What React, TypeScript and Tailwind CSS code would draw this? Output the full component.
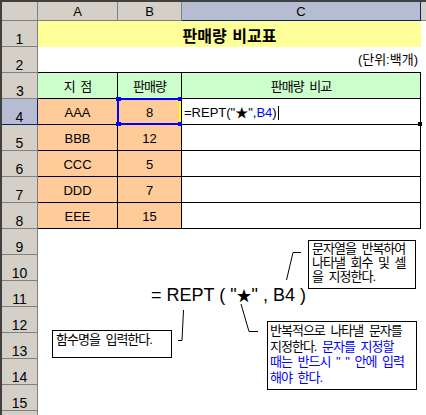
import React from 'react';

const cellFont = "font-['Liberation_Sans','Noto_Sans_CJK_KR',sans-serif]";
// Korean text: slightly larger glyphs, squeezed to the bitmap-font advance
const ko = 'text-[13px] tracking-[-1px] [word-spacing:3px]';

function RowHead({ n, active = false }: { n: number | string; active?: boolean }) {
  return (
    <div
      className={
        active
          ? 'w-[36px] shrink-0 flex items-end justify-center text-[14px] leading-none bg-[#b6bdd2] border-r border-b border-[#0a246a]'
          : 'w-[36px] shrink-0 flex items-end justify-center text-[14px] leading-none bg-[#d4d0c8] border-r border-b border-[#808080]'
      }
    >
      {n}
    </div>
  );
}

const data = [
  ['AAA', '8'],
  ['BBB', '12'],
  ['CCC', '5'],
  ['DDD', '7'],
  ['EEE', '15'],
];

const Sheet: React.FC = () => {
  return (
    <div className={`relative w-[426px] h-[415px] overflow-hidden bg-white text-black ${cellFont}`}>
      <div className="h-full flex flex-col border-t-2 border-l-2 border-[#404040]">
        {/* column headers */}
        <div className="flex h-[19px] shrink-0 text-[13px] leading-none">
          <div className="w-[36px] shrink-0 bg-[#d4d0c8] border-r border-b border-[#808080]" />
          <div className="w-[80px] shrink-0 flex items-center justify-center bg-[#d4d0c8] border-r border-b border-[#808080]">A</div>
          <div className="w-[64px] shrink-0 flex items-center justify-center bg-[#d4d0c8] border-r border-b border-[#808080]">B</div>
          <div className="w-[239px] shrink-0 flex items-center justify-center bg-[#b6bdd2] border-r border-b border-[#0a246a]">C</div>
          <div className="flex-1 bg-[#d4d0c8] border-b border-[#808080]" />
        </div>

        {/* row 1 */}
        <div className="flex h-[26px] shrink-0">
          <RowHead n={1} />
          <div className="w-[383px] shrink-0 flex items-center justify-center bg-[#ffff99] pt-[2px]">
            <span className="font-['Noto_Sans_CJK_KR',sans-serif] text-[16px] font-bold leading-none whitespace-nowrap [word-spacing:2px]">
              판매량 비교표
            </span>
          </div>
          <div className="flex-1" />
        </div>

        {/* row 2 */}
        <div className="flex h-[26px] shrink-0">
          <RowHead n={2} />
          <div className="w-[144px] shrink-0 border-b border-black" />
          <div className="w-[239px] shrink-0 flex items-center justify-end pr-[3px] pt-[1px] border-b border-black text-[13px]">
            (단위:백개)
          </div>
          <div className="flex-1" />
        </div>

        {/* row 3 */}
        <div className={`flex h-[26px] shrink-0 ${ko}`}>
          <RowHead n={3} />
          <div className="w-[80px] shrink-0 flex items-center justify-center pt-[2px] bg-[#ccffcc] border-r border-b border-black">지 점</div>
          <div className="w-[64px] shrink-0 flex items-center justify-center pt-[2px] bg-[#ccffcc] border-r border-b border-black">판매량</div>
          <div className="w-[239px] shrink-0 flex items-center justify-center pt-[2px] bg-[#ccffcc] border-r border-b border-black">판매량 비교</div>
          <div className="flex-1" />
        </div>

        {/* rows 4-8 */}
        {data.map(([name, qty], i) => (
          <div key={name} className="flex h-[26px] shrink-0 text-[13px]">
            <RowHead n={i + 4} active={i === 0} />
            <div className="w-[80px] shrink-0 flex items-center justify-center pt-[2px] bg-[#ffcc99] border-r border-b border-black">{name}</div>
            <div className="w-[64px] shrink-0 flex items-center justify-center pt-[2px] bg-[#ffcc99] border-r border-b border-black">{qty}</div>
            <div className="w-[239px] shrink-0 flex items-center pl-[2px] pt-[2px] border-r border-b border-black whitespace-nowrap">
              {i === 0 && (
                <>
                  <span>=REPT("★",</span>
                  <span className="text-[#0000ff]">B4</span>
                  <span>)</span>
                  <span className="inline-block w-px h-[14px] bg-black ml-px" />
                </>
              )}
            </div>
            <div className="flex-1" />
          </div>
        ))}

        {/* rows 9-15 */}
        {[9, 10, 11, 12, 13, 14, 15].map((n) => (
          <div key={n} className="flex h-[26px] shrink-0">
            <RowHead n={n} />
            <div className="flex-1" />
          </div>
        ))}
        <div className="flex flex-1">
          <div className="w-[36px] shrink-0 bg-[#d4d0c8] border-r border-[#808080]" />
          <div className="flex-1" />
        </div>
      </div>

      {/* B4 selection */}
      <div className="absolute left-[117px] top-[98px] w-[64px] h-[27px] border-2 border-[#0000ff] border-r-[#ffff00]" />
      <div className="absolute left-[116px] top-[97px] w-[5px] h-[4px] bg-[#0000ff]" />
      <div className="absolute left-[116px] top-[122px] w-[5px] h-[4px] bg-[#0000ff]" />
      <div className="absolute left-[178px] top-[97px] w-[4px] h-[4px] bg-[#0000ff]" />
      <div className="absolute left-[178px] top-[122px] w-[4px] h-[4px] bg-[#0000ff]" />
      {/* C4 fill handle */}
      <div className="absolute left-[418px] top-[122px] w-[4px] h-[4px] bg-black" />

      {/* leader lines */}
      <svg className="absolute left-0 top-0 pointer-events-none" width="426" height="415">
        <polyline points="286.5,280 293,252.5 301,252.5" fill="none" stroke="#000" strokeWidth="1" />
        <polyline points="241,304 249,331.5 258,331.5" fill="none" stroke="#000" strokeWidth="1" />
        <polyline points="183.5,310 182,340.5 178,340.5" fill="none" stroke="#000" strokeWidth="1" />
      </svg>

      {/* formula */}
      <div className="absolute left-[151px] top-[286px] text-[18px] leading-none whitespace-nowrap">
        = REPT ( "<span className="text-[15px]">★</span>" , B4 )
      </div>

      {/* callouts */}
      <div className={`absolute left-[308px] top-[240px] w-[108px] h-[49px] border border-black bg-white px-[3px] pt-[1px] leading-[14px] whitespace-nowrap ${ko}`}>
        문자열을 반복하여
        <br />
        나타낼 회수 및 셀
        <br />을 지정한다.
      </div>
      <div className={`absolute left-[267px] top-[321px] w-[150px] h-[69px] border border-black bg-white px-[2px] pt-[1px] leading-[15.5px] whitespace-nowrap ${ko}`}>
        반복적으로 나타낼 문자를
        <br />
        지정한다. <span className="text-[#0000ff]">문자를 지정할</span>
        <br />
        <span className="text-[#0000ff]">때는 반드시 " " 안에 입력</span>
        <br />
        <span className="text-[#0000ff]">해야 한다.</span>
      </div>
      <div className={`absolute left-[52px] top-[330px] w-[120px] h-[28px] border border-black bg-white px-[3px] pt-[2px] leading-[14px] whitespace-nowrap ${ko}`}>
        함수명을 입력한다.
      </div>
    </div>
  );
};

export default function App() {
  return <Sheet />;
}
